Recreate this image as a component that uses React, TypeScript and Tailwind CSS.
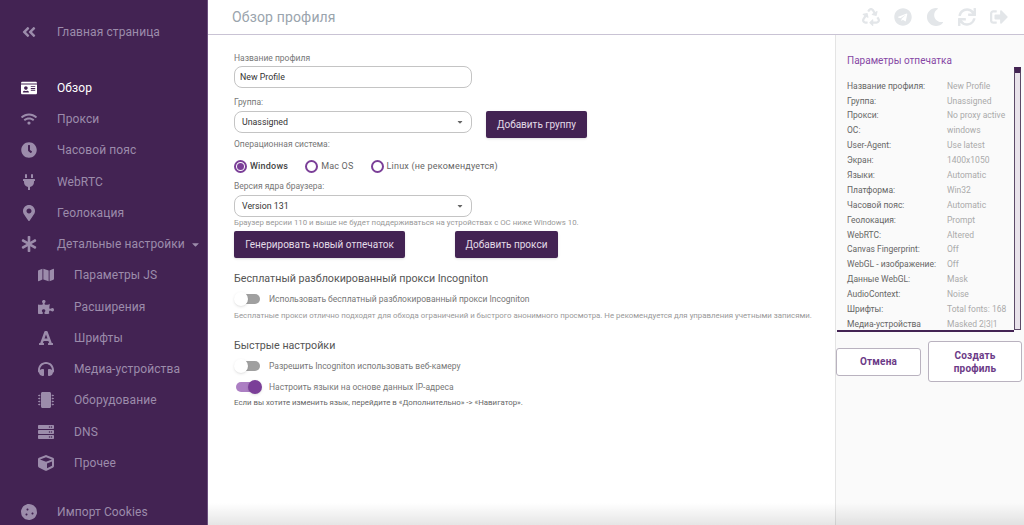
import React from 'react';
import {
  FaAngleDoubleLeft, FaIdCard, FaWifi, FaClock, FaPlug, FaMapMarkerAlt, FaAsterisk, FaMap,
  FaPuzzlePiece, FaFont, FaHeadphones, FaMicrochip, FaServer, FaCube, FaCookie, FaRecycle,
  FaTelegram, FaMoon, FaSync, FaSignOutAlt, FaCaretDown,
} from 'react-icons/fa';

const font = { fontFamily: 'Roboto, sans-serif' };

const MainItem = ({ icon, label, active }: { icon: React.ReactNode; label: string; active?: boolean }) => (
  <div className={`flex items-center h-[31.25px] shrink-0 pl-[21px] whitespace-nowrap ${active ? 'text-white' : 'text-[#9c8cab]'}`}>
    <span className="w-[36px] flex text-[16px]">{icon}</span>
    <span className="text-[12px] tracking-[0.1px]">{label}</span>
  </div>
);

const SubItem = ({ icon, label }: { icon: React.ReactNode; label: string }) => (
  <div className="flex items-center h-[31.25px] shrink-0 pl-[38px] whitespace-nowrap text-[#9c8cab]">
    <span className="w-[36px] flex text-[16px]">{icon}</span>
    <span className="text-[12px] tracking-[0.1px]">{label}</span>
  </div>
);

const Sidebar = () => (
  <aside className="w-[208px] shrink-0 h-full bg-[#432353] border-r border-[#6b4f7d] overflow-hidden flex flex-col pt-[16px]">
    <MainItem icon={<FaAngleDoubleLeft />} label="Главная страница" />
    <div className="h-[25px] shrink-0" />
    <MainItem active icon={<FaIdCard />} label="Обзор" />
    <MainItem icon={<FaWifi />} label="Прокси" />
    <MainItem icon={<FaClock />} label="Часовой пояс" />
    <MainItem icon={<FaPlug />} label="WebRTC" />
    <MainItem icon={<FaMapMarkerAlt />} label="Геолокация" />
    <div className="flex items-center h-[31.25px] shrink-0 pl-[21px] whitespace-nowrap text-[#9c8cab]">
      <span className="w-[36px] flex text-[16px]"><FaAsterisk /></span>
      <span className="text-[12px] tracking-[0.1px]">Детальные настройки</span>
      <FaCaretDown className="ml-[5px] text-[11px]" />
    </div>
    <SubItem icon={<FaMap />} label="Параметры JS" />
    <SubItem icon={<FaPuzzlePiece />} label="Расширения" />
    <SubItem icon={<FaFont />} label="Шрифты" />
    <SubItem icon={<FaHeadphones />} label="Медиа-устройства" />
    <SubItem icon={<FaMicrochip />} label="Оборудование" />
    <SubItem icon={<FaServer />} label="DNS" />
    <SubItem icon={<FaCube />} label="Прочее" />
    <div className="h-[18px] shrink-0" />
    <MainItem icon={<FaCookie />} label="Импорт Cookies" />
  </aside>
);

const Pill = ({ children, select }: { children: React.ReactNode; select?: boolean }) => (
  <div className={`w-[238px] h-[22px] rounded-[8px] border border-[#c4c4c4] bg-white flex items-center justify-between text-[8.8px] text-[#333] ${select ? 'pl-[7px] pr-[7px]' : 'pl-[5px]'}`}>
    <span className="pt-px">{children}</span>
    {select && <FaCaretDown className="text-[8px] text-[#666]" />}
  </div>
);

const Radio = ({ on, label, className }: { on?: boolean; label: string; className?: string }) => (
  <div className={`flex items-center ${className ?? ''}`}>
    <span className="w-[13px] h-[13px] rounded-full border-2 border-[#7b3f98] flex items-center justify-center">
      {on && <span className="w-[7px] h-[7px] rounded-full bg-[#7b3f98]" />}
    </span>
    <span className={`ml-[3px] text-[9px] tracking-[0.2px] ${on ? 'font-medium text-[#444]' : 'text-[#666]'}`}>{label}</span>
  </div>
);

const Btn = ({ children, className }: { children: React.ReactNode; className?: string }) => (
  <div className={`h-[27px] rounded-[2px] bg-[#432353] text-[#e3dce8] text-[10px] flex items-center justify-center shadow-sm ${className ?? ''}`}>{children}</div>
);

const Toggle = ({ on, label }: { on?: boolean; label: string }) => (
  <div className="flex items-center h-[14px]">
    <span className={`relative w-[24px] h-[10px] ml-[2px] rounded-full ${on ? 'bg-[#ac7fc3]' : 'bg-[#a0a0a0]'}`}>
      <span className={`absolute top-[-2px] w-[14px] h-[14px] rounded-full shadow ${on ? 'right-[-2px] bg-[#7b3f98]' : 'left-[-2px] bg-white'}`} />
    </span>
    <span className="ml-[9px] text-[8.5px] text-[#777]">{label}</span>
  </div>
);

const fingerprint = [
  ['Группа:', 'Unassigned'],
  ['Прокси:', 'No proxy active'],
  ['ОС:', 'windows'],
  ['User-Agent:', 'Use latest'],
  ['Экран:', '1400x1050'],
  ['Языки:', 'Automatic'],
  ['Платформа:', 'Win32'],
  ['Часовой пояс:', 'Automatic'],
  ['Геолокация:', 'Prompt'],
  ['WebRTC:', 'Altered'],
  ['Canvas Fingerprint:', 'Off'],
  ['WebGL - изображение:', 'Off'],
  ['Данные WebGL:', 'Mask'],
  ['AudioContext:', 'Noise'],
  ['Шрифты:', 'Total fonts: 168'],
  ['Медиа-устройства', 'Masked 2|3|1'],
];

const Row = ({ k, v }: { k: string; v: string }) => (
  <div className="flex items-center h-[14.9px] shrink-0 text-[8.5px] whitespace-nowrap">
    <span className="w-[100px] text-[#666]">{k}</span>
    <span className="text-[#aaa]">{v}</span>
  </div>
);

const RightPanel = () => (
  <div className="w-[189px] ml-auto h-full border-l border-[#e4e4e4] bg-[#fafafa] pl-px pt-[19px]">
    <div className="text-[10px] leading-[13px] pl-[10px] text-[#8648a5]">Параметры отпечатка</div>
    <div className="flex h-[265px]">
      <div className="w-[177px] h-full border-b-2 border-[#432353] overflow-hidden pl-[10px] pt-[15px]">
        <div className="h-[11.5px] overflow-hidden">
          <div className="-mt-[3.4px]"><Row k="Название профиля:" v="New Profile" /></div>
        </div>
        {fingerprint.map(([k, v]) => <Row key={k} k={k} v={v} />)}
      </div>
      <div className="w-[7px] h-[263px] bg-[#e8e2ea] border border-[#5c4a68] border-t-[6px] border-t-[#432353]" />
    </div>
    <div className="flex items-center mt-[9px] -ml-px">
      <div className="w-[85px] h-[28px] rounded-[3px] border border-[#b9b2bf] bg-white text-[#6b3a87] text-[10px] font-bold tracking-[0.2px] flex items-center justify-center">Отмена</div>
      <div className="w-[94px] h-[41px] ml-[7px] rounded-[3px] border border-[#b9b2bf] bg-white text-[#6b3a87] text-[10px] font-bold tracking-[0.2px] leading-[13px] flex items-center justify-center text-center">Создать<br />профиль</div>
    </div>
  </div>
);

export default function App() {
  return (
    <div className="flex w-[1024px] h-[525px] overflow-hidden bg-white" style={font}>
      <Sidebar />
      <div className="relative flex-1 flex flex-col min-w-0">
        <header className="h-[35px] shrink-0 border-b border-[#c9c3d4] flex items-center justify-between pl-[24px] pr-[16px]">
          <span className="text-[14px] text-[#9aa4ad] tracking-[0.15px]">Обзор профиля</span>
          <div className="flex items-center gap-[14px] text-[18px] text-[#e3e6e9]">
            <FaRecycle /><FaTelegram /><FaMoon /><FaSync /><FaSignOutAlt />
          </div>
        </header>
        <div className="flex flex-1 min-h-0">
          <div className="w-[627px] pl-[26px] pt-[17px] shrink-0">
            <div className="text-[8.5px] text-[#777] leading-[12px] mb-[2px]">Название профиля</div>
            <Pill>New Profile</Pill>
            <div className="text-[8.5px] text-[#777] leading-[12px] mt-[8px] mb-[3px]">Группа:</div>
            <div className="flex items-start">
              <Pill select>Unassigned</Pill>
              <Btn className="w-[101px] ml-[14px]">Добавить группу</Btn>
            </div>
            <div className="text-[8.5px] text-[#777] leading-[12px]">Операционная система:</div>
            <div className="flex items-center h-[14px] mt-[9px] pt-px">
              <Radio on label="Windows" />
              <Radio label="Mac OS" className="ml-[17px]" />
              <Radio label="Linux (не рекомендуется)" className="ml-[17px]" />
            </div>
            <div className="text-[8.5px] text-[#777] leading-[12px] mt-[7px] mb-[3px]">Версия ядра браузера:</div>
            <Pill select>Version 131</Pill>
            <div className="text-[7.85px] text-[#999] leading-[10px] mt-px">Браузер версии 110 и выше не будет поддерживаться на устройствах с ОС ниже Windows 10.</div>
            <div className="flex mt-[3px]">
              <Btn className="w-[171px]">Генерировать новый отпечаток</Btn>
              <Btn className="w-[103px] ml-[50px]">Добавить прокси</Btn>
            </div>
            <div className="text-[10.7px] text-[#555] leading-[14px] mt-[14px]">Бесплатный разблокированный прокси Incogniton</div>
            <div className="mt-[6px]"><Toggle label="Использовать бесплатный разблокированный прокси Incogniton" /></div>
            <div className="text-[7.85px] text-[#999] leading-[10px] mt-[5px]">Бесплатные прокси отлично подходят для обхода ограничений и быстрого анонимного просмотра. Не рекомендуется для управления учетными записями.</div>
            <div className="text-[10.7px] text-[#555] leading-[14px] mt-[18px]">Быстрые настройки</div>
            <div className="mt-[6px]"><Toggle label="Разрешить Incogniton использовать веб-камеру" /></div>
            <div className="mt-[7px]"><Toggle on label="Настроить языки на основе данных IP-адреса" /></div>
            <div className="text-[7.85px] text-[#666] leading-[10px] mt-[4px]">Если вы хотите изменить язык, перейдите в «Дополнительно» -&gt; «Навигатор».</div>
          </div>
          <RightPanel />
        </div>
        <div className="absolute left-0 right-0 bottom-0 h-[22px] pointer-events-none bg-linear-to-t from-black/10 to-transparent" />
      </div>
    </div>
  );
}
